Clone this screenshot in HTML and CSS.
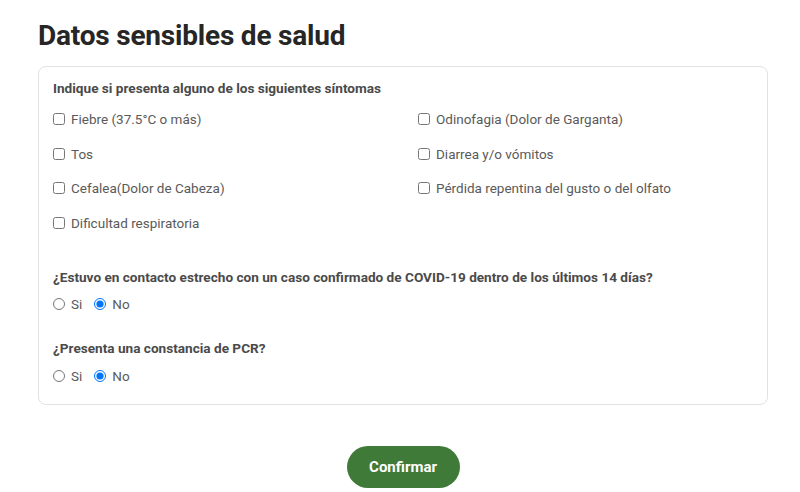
FILE: index.html
```html
<!DOCTYPE html>
<html lang="es">
<head>
    <meta charset="UTF-8">
    <meta name="viewport" content="width=device-width, initial-scale=1.0">
    <title>Datos sensibles de salud</title>
    <link rel="stylesheet" href="styles.css">
</head>
<body>
    <div id="container">
        <h1>Datos sensibles de salud</h1>
        <form id="healthForm">
            <div class="card">
                <p class="question">Indique si presenta alguno de los siguientes síntomas</p>
                <div class="symptoms">
                    <label class="option"><input type="checkbox" name="fiebre"> Fiebre (37.5°C o más)</label>
                    <label class="option"><input type="checkbox" name="odinofagia"> Odinofagia (Dolor de Garganta)</label>
                    <label class="option"><input type="checkbox" name="tos"> Tos</label>
                    <label class="option"><input type="checkbox" name="diarrea"> Diarrea y/o vómitos</label>
                    <label class="option"><input type="checkbox" name="cefalea"> Cefalea(Dolor de Cabeza)</label>
                    <label class="option"><input type="checkbox" name="gusto"> Pérdida repentina del gusto o del olfato</label>
                    <label class="option"><input type="checkbox" name="dificultad"> Dificultad respiratoria</label>
                </div>

                <p class="question q-contact">¿Estuvo en contacto estrecho con un caso confirmado de COVID-19 dentro de los últimos 14 días?</p>
                <div class="radios">
                    <label class="option"><input type="radio" name="contacto" value="si"> Si</label>
                    <label class="option"><input type="radio" name="contacto" value="no" checked> No</label>
                </div>

                <p class="question q-pcr">¿Presenta una constancia de PCR?</p>
                <div class="radios">
                    <label class="option"><input type="radio" name="pcr" value="si"> Si</label>
                    <label class="option"><input type="radio" name="pcr" value="no" checked> No</label>
                </div>
            </div>
            <div class="actions">
                <button type="submit" class="btn-confirm">Confirmar</button>
            </div>
        </form>
    </div>
</body>
</html>
```

FILE: styles.css
```css
body {
    font-family: Roboto, "Open Sans", sans-serif;
    margin: 0;
    padding: 0;
    background-color: #fff;
    color: #555;
}
#container {
    padding: 19px 32px 0 38px;
}
h1 {
    font-size: 28px;
    font-weight: 700;
    color: #262626;
    margin: 0 0 14px 0;
    letter-spacing: -0.2px;
}
.card {
    border: 1px solid #e2e2e2;
    border-radius: 8px;
    padding: 12px 14px 19px 14px;
}
.question {
    font-size: 13.6px;
    font-weight: 700;
    color: #4a4a4a;
    margin: 0;
    line-height: 18px;
}
.symptoms {
    display: grid;
    grid-template-columns: 365px 1fr;
    row-gap: 16.5px;
    margin-top: 13px;
}
.option {
    display: flex;
    align-items: center;
    font-size: 13.5px;
    color: #5a5a5a;
    line-height: 18px;
}
.option input {
    margin: 0 6px 0 0;
    width: 12px;
    height: 12px;
}
.q-contact {
    margin-top: 36px;
}
.q-pcr {
    margin-top: 26px;
}
.radios {
    display: flex;
    gap: 12px;
    margin-top: 9px;
}
.q-pcr + .radios {
    margin-top: 10px;
}
.actions {
    display: flex;
    justify-content: center;
    margin-top: 41px;
}
.btn-confirm {
    background-color: #3f7a38;
    color: #fff;
    font-family: Roboto, sans-serif;
    font-size: 15px;
    font-weight: 700;
    border: none;
    border-radius: 21px;
    width: 113px;
    height: 42px;
    cursor: pointer;
}
.btn-confirm:hover {
    background-color: #35692f;
}
```
